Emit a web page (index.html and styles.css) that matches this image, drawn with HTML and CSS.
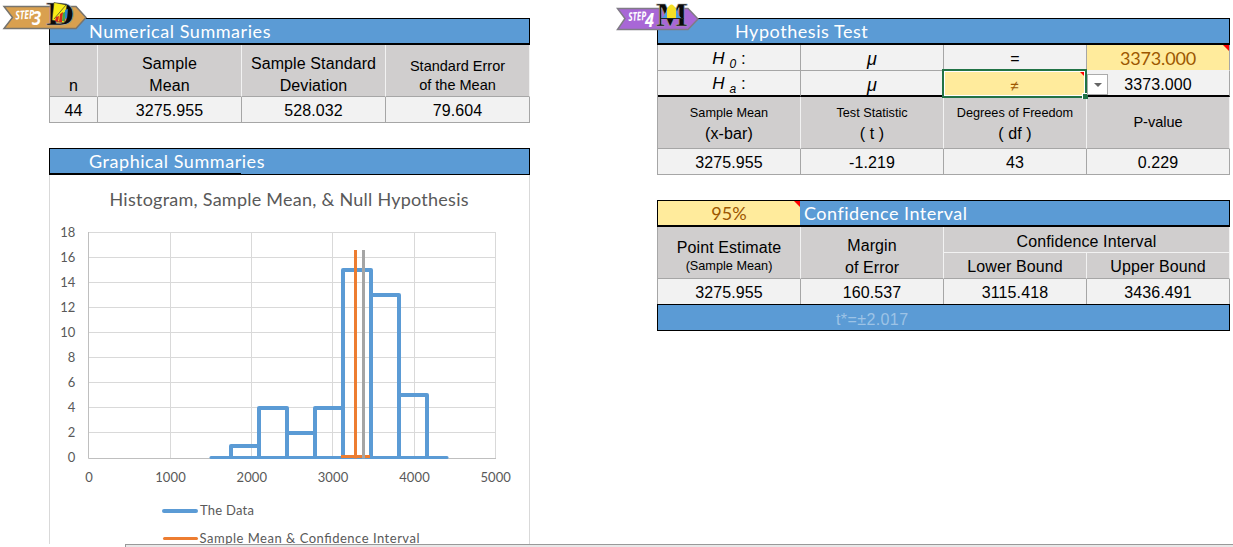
FILE: index.html
```html
<!DOCTYPE html>
<html lang="en">
<head>
<meta charset="utf-8">
<title>Hypothesis Test Worksheet</title>
<link rel="stylesheet" href="styles.css">
</head>
<body>
<main class="sheet">
  <section class="left">
    <svg class="badge badge-d" width="90" height="32" viewBox="0 0 90 32">
      <polygon points="4,6.5 76,6.5 86,17.5 76,28.5 4,28.5 12.500,17.500" fill="#d9a04f" stroke="#77746e" stroke-width="1.500"/>
      <g class="step" transform="translate(15.500 19.500) rotate(-3)"><text font-size="12" textLength="19" lengthAdjust="spacingAndGlyphs">STEP</text></g>
      <text class="step" x="32" y="25" font-size="19" textLength="9" lengthAdjust="spacingAndGlyphs">3</text>
      <text class="letter" x="46" y="24.500" font-size="33" textLength="29" lengthAdjust="spacingAndGlyphs">D</text>
      <polygon points="54,2.500 67,5 64,23 52,20" fill="#f8ec16" stroke="#333" stroke-width=".6"/>
      <polygon points="56,17 59,16 58,22 55,21" fill="#d8281c"/>
      <polygon points="60,14 63,12 62,22 59,22" fill="#d8281c"/>
      <polygon points="63,13 66,11 64,21 62,21" fill="#3da44a"/>
      <polygon points="65,10 68,9 67,18 65,19" fill="#2d84c9"/>
      <path d="M54 19L66 5" stroke="#333" stroke-width=".7"/>
    </svg>
    <div class="title title-thick"><span class="t-num">Numerical Summaries</span></div>
    <div class="grid summary">
      <div class="head low">n</div>
      <div class="head low"><span>Sample<br>Mean</span></div>
      <div class="head low"><span>Sample Standard<br>Deviation</span></div>
      <div class="head low mid"><span>Standard Error<br>of the Mean</span></div>
      <div class="cell">44</div><div class="cell">3275.955</div><div class="cell">528.032</div><div class="cell">79.604</div>
    </div>
    <div class="title title-graph"><span class="t-graph">Graphical Summaries</span></div>
    <svg class="chart" width="481" height="372" viewBox="49 175 481 372">
      <path d="M49.500 175V544M529.500 175V544" stroke="#d9d9d9"/>
      <text class="chart-title" x="109.500" y="206" textLength="359">Histogram, Sample Mean, &amp; Null Hypothesis</text>
      <path d="M88 232.500H496M88 257.500H496M88 282.500H496M88 307.500H496M88 332.500H496M88 357.500H496M88 382.500H496M88 407.500H496M88 432.500H496M170.500 232V458M251.500 232V458M332.500 232V458M414.500 232V458M495.500 232V458" stroke="#d9d9d9"/>
      <path d="M88.500 232V458.500H496" fill="none" stroke="#bfbfbf"/>
      <g class="axis" text-anchor="end">
        <text x="75.500" y="237">18</text><text x="75.500" y="262">16</text><text x="75.500" y="287">14</text><text x="75.500" y="312">12</text><text x="75.500" y="337">10</text><text x="75.500" y="362">8</text><text x="75.500" y="387">6</text><text x="75.500" y="412">4</text><text x="75.500" y="437">2</text><text x="75.500" y="462">0</text>
      </g>
      <g class="axis" text-anchor="middle">
        <text x="89" y="482">0</text><text x="170.500" y="482">1000</text><text x="251.800" y="482">2000</text><text x="333" y="482">3000</text><text x="414.500" y="482">4000</text><text x="495.700" y="482">5000</text>
      </g>
      <g fill="none" stroke="#5b9bd5" stroke-linejoin="round" stroke-linecap="round">
        <path d="M211 457.500H447" stroke-width="3"/>
        <path d="M231 457V446H259M259 457V408H287V457M287 433H315M315 457V408H343M343 457V270H371V457M371 295H399V457M399 395H427V457" stroke-width="4"/>
      </g>
      <path d="M341 456.500H370M355.500 250V458.500" stroke="#ed7d31" stroke-width="3"/>
      <path d="M363.500 250V458.500" stroke="#a5a5a5" stroke-width="3"/>
      <path d="M164 511H196" stroke="#5b9bd5" stroke-width="4" stroke-linecap="round"/>
      <path d="M164.500 538.500H196.500" stroke="#ed7d31" stroke-width="3" stroke-linecap="round"/>
      <g class="legend"><text x="200" y="515" textLength="54">The Data</text><text x="199.500" y="543" textLength="220">Sample Mean &amp; Confidence Interval</text></g>
    </svg>
  </section>

  <section class="right">
    <svg class="badge badge-m" width="90" height="32" viewBox="614 0 90 32">
      <polygon points="617.500,8.500 688,8.500 698,19 688,29.500 617.500,29.500 625,18.500" fill="#a867d6" stroke="#807b86" stroke-width="1.500"/>
      <g class="step" transform="translate(628.500 21) rotate(-3)"><text font-size="12" textLength="18" lengthAdjust="spacingAndGlyphs">STEP</text></g>
      <text class="step" x="645" y="27" font-size="19" textLength="9" lengthAdjust="spacingAndGlyphs">4</text>
      <text class="letter" x="656" y="25.500" font-size="33" textLength="32" lengthAdjust="spacingAndGlyphs">M</text>
      <path d="M661 18.500Q665 16 667 8H676Q678 16 682 18.500Z" fill="#4b9be0"/>
      <path d="M667 18V9Q671.500 0 676 9V18Z" fill="#f6df25"/>
      <path d="M661 18.500H684" stroke="#222"/>
    </svg>
    <div class="title title-thick"><span class="t-hyp">Hypothesis Test</span></div>
    <div class="grid test">
      <div class="cell hyp"><i>H <sub>0</sub></i>&nbsp;:</div><div class="cell mu">μ</div><div class="cell">=</div><div class="cell input null-value">3373.000<b class="note"></b></div>
      <div class="cell hyp rule"><i>H <sub>a</sub></i>&nbsp;:</div><div class="cell mu rule">μ</div>
      <div class="cell rule picked"><div class="selection">≠<b class="note"></b><b class="handle"></b></div></div>
      <div class="cell rule alt-value">3373.000<span class="dropdown"></span></div>
      <div class="head stat"><small>Sample Mean</small>(x-bar)</div>
      <div class="head stat"><small>Test Statistic</small>( t )</div>
      <div class="head stat"><small>Degrees of Freedom</small>( df )</div>
      <div class="head mid">P-value</div>
      <div class="cell">3275.955</div><div class="cell">-1.219</div><div class="cell">43</div><div class="cell">0.229</div>
    </div>
    <div class="title title-thick interval-title"><div class="level">95%<b class="note"></b></div><span class="t-ci">Confidence Interval</span></div>
    <div class="grid interval">
      <div class="head tall stat point">Point Estimate<small>(Sample Mean)</small></div>
      <div class="head tall low"><span>Margin<br>of Error</span></div>
      <div class="head wide">Confidence Interval</div>
      <div class="head bound">Lower Bound</div><div class="head bound">Upper Bound</div>
      <div class="cell last">3275.955</div><div class="cell last">160.537</div><div class="cell last">3115.418</div><div class="cell last">3436.491</div>
    </div>
    <div class="critical"><span>t*=±2.017</span></div>
  </section>
  <div class="scrollbar"></div>
</main>
</body>
</html>
```
FILE: styles.css
```css
* { box-sizing: border-box; }
body { margin: 0; background: #fff; color: #000; font-family: "Liberation Sans", Arial, sans-serif; font-size: 16px; overflow: hidden; }
.sheet { position: relative; width: 1233px; height: 547px; padding: 18px 3px 0 49px; display: flex; justify-content: space-between; align-items: flex-start; overflow: hidden; }
.left { width: 481px; }
.right { width: 573px; }
.badge { position: absolute; top: 0; z-index: 2; overflow: visible; }
.badge-d { left: 0; }
.badge-m { left: 614px; }
.step { fill: #fff; font-family: "Open Sans", sans-serif; font-weight: 700; font-style: italic; }
.letter { fill: #0a0a0a; stroke: #aaa; stroke-width: .6px; font-family: "Liberation Serif", serif; font-weight: bold; }

.title { height: 27px; display: flex; align-items: center; background: #5b9bd5; border: 1px solid #000; color: #fff; font-family: Lato, sans-serif; font-size: 18px; line-height: 24px; white-space: nowrap; }
.title-thick { border-bottom-width: 2px; }
.t-num, .t-graph, .t-hyp, .t-ci { letter-spacing: .55px; }
.t-num, .t-graph { padding-left: 39px; }
.t-graph { padding-bottom: 2px; }
.t-hyp { padding-left: 77px; }
.t-ci { padding-left: 4px; letter-spacing: .48px; }
.title-graph { margin-top: 25px; background: linear-gradient(#000, #000) left bottom / 191px 1px no-repeat #5b9bd5; }

.grid { display: grid; border-left: 1px solid #a6a6a6; }
.summary { grid-template-columns: 48px 144px 144px 144px; grid-template-rows: 52px 26px; }
.test { grid-template-columns: repeat(4, 143px); grid-template-rows: 26px 26px 52px 26px; }
.interval { grid-template-columns: repeat(4, 143px); grid-template-rows: 26px 26px 25px; }
.head, .cell { position: relative; display: flex; align-items: center; justify-content: center; text-align: center; border-right: 1px solid #a6a6a6; border-bottom: 1px solid #a6a6a6; white-space: nowrap; letter-spacing: .1px; }
.cell { background: #f2f2f2; line-height: 24px; padding-top: 3px; }
.head { background: #d0cece; border-right-color: #f2f2f2; line-height: 22px; }
.low > span { position: relative; top: 1px; }
.low { align-items: flex-end; }
.summary .low:first-child { line-height: 20px; }
.mid { font-size: 14.5px; line-height: 19px; letter-spacing: 0; }
.low.mid { padding-bottom: 2px; }
.stat { flex-direction: column; line-height: 21px; padding-top: 2px; }
.head small { font-size: 12.7px; letter-spacing: 0; line-height: 20px; }
.cell.hyp { font-size: 17px; padding-top: 2px; }
.hyp sub { font-size: 12px; line-height: 0; vertical-align: -4px; }
.mu { font-size: 18px; font-style: italic; }
.rule { border-bottom: 2px solid #000; }
.input { background: #ffeb9c; color: #9c5700; border-bottom-color: #f2f2f2; }
.cell.null-value { font-family: Lato, sans-serif; font-size: 18px; letter-spacing: -.15px; padding-top: 1px; }
.note { position: absolute; top: 0; right: 0; border-top: 6px solid #f00; border-left: 6px solid transparent; }
.picked { z-index: 3; }
.selection { position: absolute; inset: -2px -1px -3px -2px; border: 2px solid #217346; outline: 1px solid #fff; outline-offset: -3px; background: #ffeb9c; color: #9c5700; display: flex; align-items: center; justify-content: center; padding-top: 5px; font-size: 15px; }
.selection .note { top: 1px; right: 1px; border-width: 4px 0 0 4px; }
.handle { position: absolute; right: -3px; bottom: -3px; width: 6px; height: 6px; background: #217346; border: 1px solid #fff; border-width: 1px 0 0 1px; }
.dropdown { position: absolute; left: 0; top: 3px; width: 21px; height: 21px; background: #fff; border: 1px solid #ababab; display: grid; place-items: center; z-index: 4; }
.dropdown::after { content: ""; border: 4px solid transparent; border-top-color: #666; border-bottom: 0; }

.interval-title { margin-top: 25px; }
.level { position: relative; width: 142px; height: 24px; background: #ffeb9c; color: #9c5700; text-align: center; }
.tall { grid-row: span 2; }
.point small { line-height: 17px; }
.point { padding-top: 7px; }
.wide { grid-column: span 2; border-bottom-color: #f2f2f2; padding-top: 4px; }
.bound { padding-top: 3px; }
.last { border-bottom: 0; }
.critical { height: 27px; background: #5b9bd5; border: 1px solid #000; color: #9dc3e6; letter-spacing: .4px; line-height: 29px; padding-left: 178px; }

.chart { display: block; fill: #595959; font-family: Lato, sans-serif; }
.chart-title { font-size: 18px; }
.axis, .legend { font-size: 13px; }
.axis { letter-spacing: .1px; }
.scrollbar { position: absolute; left: 125px; right: 0; bottom: 0; height: 3px; background: #e8e8e8; border-top: 1px solid #999; border-left: 1px solid #999; }
```
